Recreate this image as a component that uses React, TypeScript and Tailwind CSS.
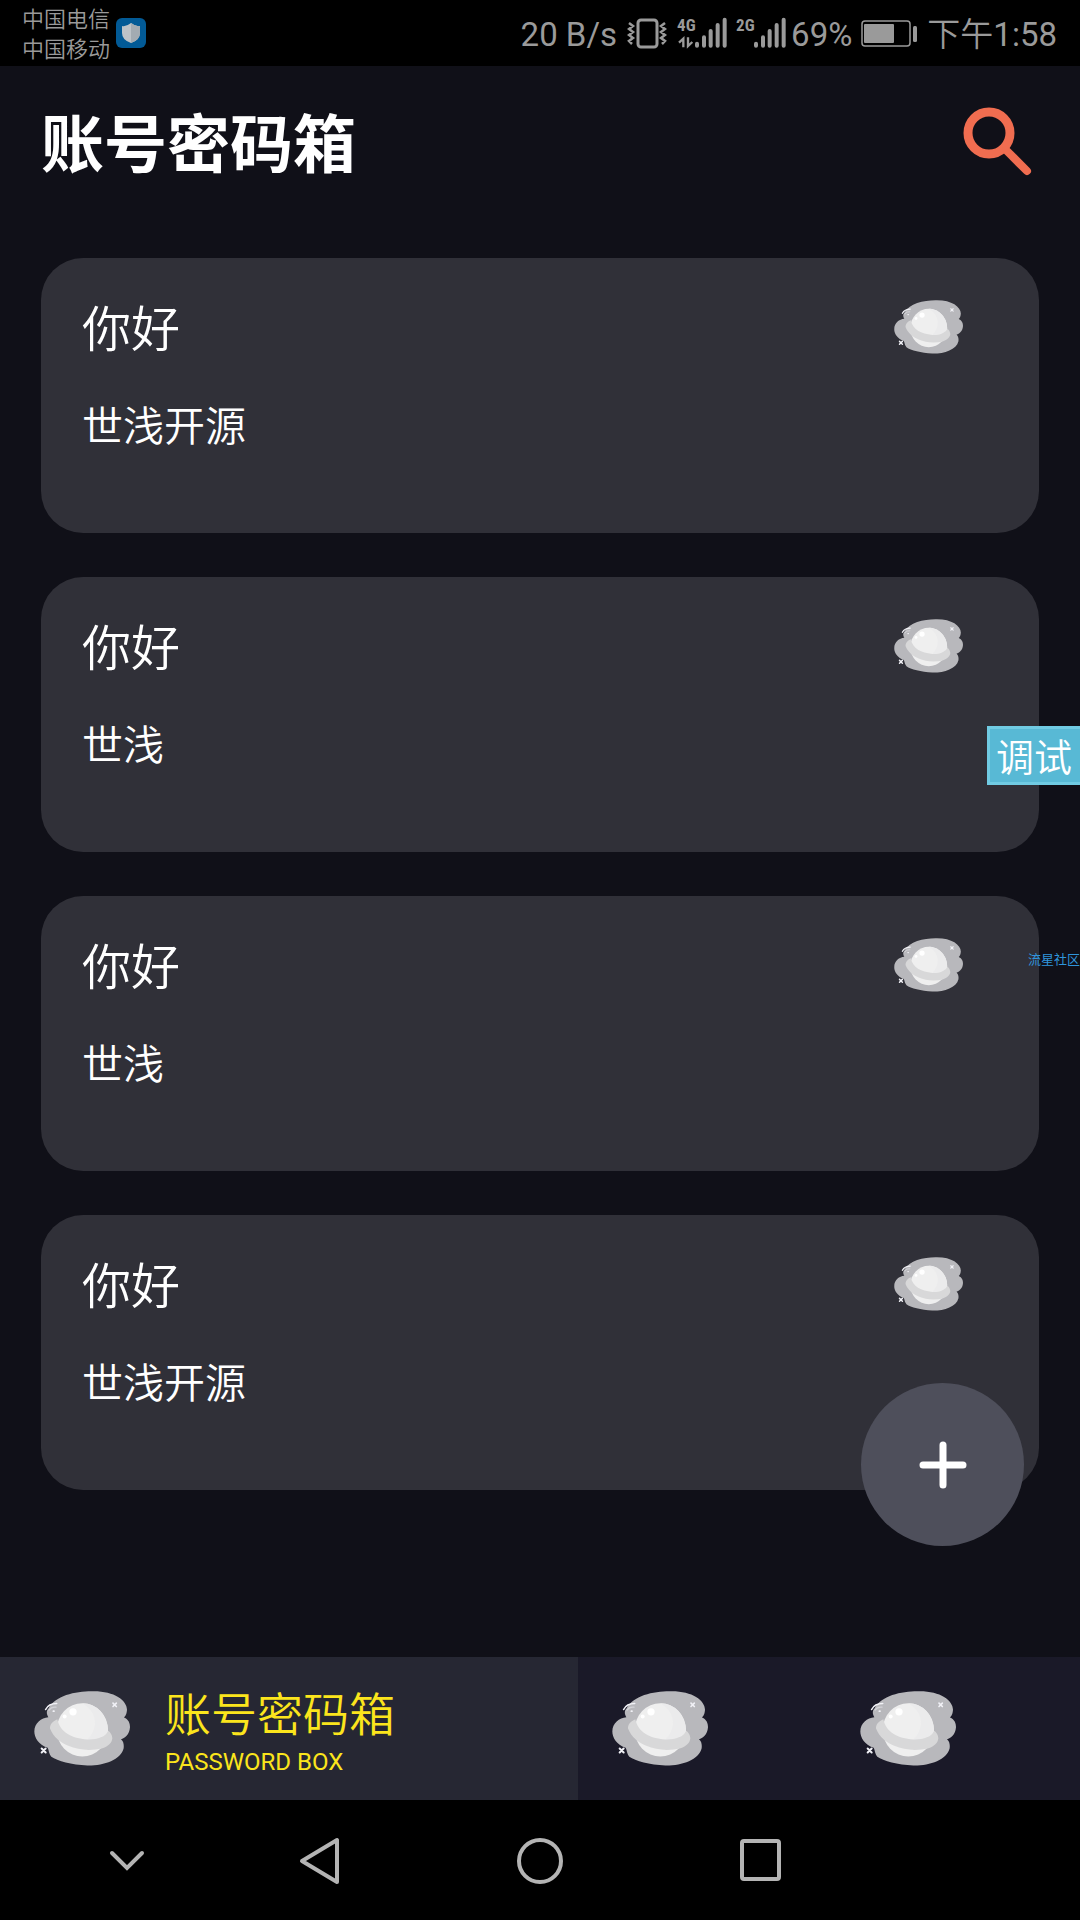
import { useState } from "react";

interface Account {
  id: number;
  title: string;
  owner: string;
}

const ACCOUNTS: Account[] = [
  { id: 1, title: "你好", owner: "世浅开源" },
  { id: 2, title: "你好", owner: "世浅" },
  { id: 3, title: "你好", owner: "世浅" },
  { id: 4, title: "你好", owner: "世浅开源" },
];

function PlanetIcon({ className }: { className: string }) {
  return (
    <svg viewBox="102 152 288 224" className={className} aria-hidden="true">
      <path
        d="M145 230C140 222 138 212 145 205C165 165 225 152 275 152C340 150 381 178 381 208C380 222 376 227 372 231C386 237 390 248 390 260C388 284 374 292 363 296C371 303 372 312 371 323C363 358 310 376 262 375C215 373 172 362 154 349C146 338 147 330 143 322C115 312 103 291 103 273C103 247 124 232 145 230Z"
        fill="#b8b8bc"
      />
      <ellipse cx="247" cy="268" rx="77" ry="80" fill="#efefef" />
      <path
        d="M247 188C292 188 324 226 324 272C312 292 285 297 262 297C290 270 300 220 247 188Z"
        fill="#ebebec"
      />
      <path
        d="M172 236C156 243 150 252 150 264C160 290 182 307 205 316C235 330 275 331 305 324C325 318 336 306 337 293C336 283 332 277 325 271C316 290 290 298 262 297C215 293 180 275 172 236Z"
        fill="#d8d8d9"
      />
      <circle cx="219" cy="214" r="11" fill="#fff" />
      <circle cx="194" cy="228" r="6" fill="#fff" />
      <g fill="none" stroke="#f1f1f6" strokeLinecap="round">
        <path d="M137 207Q146 189 170 189" strokeWidth="5" />
        <path d="M147 209Q154 198 168 200" strokeWidth="4" stroke="#d2d2d7" />
        <path d="M160 212h2" strokeWidth="5" />
        <path d="M125 324l12 12M137 324l-12 12" strokeWidth="6" />
        <path d="M339 188l10 10M349 188l-10 10" strokeWidth="5" />
      </g>
    </svg>
  );
}

function ShieldBadge() {
  return (
    <svg viewBox="0 0 30 30" className="size-[30px]" aria-hidden="true">
      <rect width="30" height="30" rx="6" fill="#025a96" />
      <path d="M15 5Q20 9 24 8V15Q24 22 15 25Q6 22 6 15V8Q10 9 15 5Z" fill="#bdc3c8" />
      <path d="M15 5Q20 9 24 8V15Q24 22 15 25Z" fill="#a3abb2" />
    </svg>
  );
}

function VibrateIcon() {
  return (
    <svg viewBox="0 0 40 32" className="h-8 w-10" fill="none" stroke="#9a9a9a" aria-hidden="true">
      <rect x="11" y="3" width="19" height="27" rx="3" strokeWidth="3" />
      <path
        d="M2 6l4 3-4 3 4 3-4 3 4 3-4 3 3 3M38 6l-4 3 4 3-4 3 4 3-4 3 4 3-3 3"
        strokeWidth="2.5"
      />
    </svg>
  );
}

function SignalIcon({ label, data }: { label: string; data?: boolean }) {
  return (
    <div className="relative h-8 w-[50px]">
      <svg viewBox="528 51 150 96" className="h-8 w-[50px]" aria-hidden="true">
        <g stroke="#9a9a9a" strokeWidth="12" strokeLinecap="round">
          <path d="M588 131v6M609 112v25M629 93v44M650 75v62M671 59v78" />
        </g>
        {data && (
          <g stroke="#9a9a9a" strokeWidth="7" fill="none">
            <path d="M547 142V116L534 128M561 112V138L574 126" />
          </g>
        )}
      </svg>
      <span className="absolute top-0 left-0 font-['Roboto_Condensed',Roboto,sans-serif] text-[17px] leading-4 font-bold">
        {label}
      </span>
    </div>
  );
}

function BatteryIcon() {
  return (
    <svg viewBox="0 0 56 28" className="h-7 w-14" aria-hidden="true">
      <rect x="1" y="2" width="48" height="25" rx="3" fill="none" stroke="#9a9a9a" strokeWidth="1.5" />
      <rect x="3" y="5" width="30" height="19" rx="1" fill="#9a9a9a" />
      <rect x="52" y="7" width="4" height="16" rx="1.5" fill="#9a9a9a" />
    </svg>
  );
}

function StatusBar() {
  return (
    <div className="flex h-[66px] shrink-0 items-center justify-between bg-black pr-[23px] pl-[22px] text-[#9a9a9a]">
      <div className="flex items-center gap-[6px]">
        <div className="pt-1 text-[22px] leading-[30px] font-[350]">
          <p>中国电信</p>
          <p>中国移动</p>
        </div>
        <ShieldBadge />
      </div>
      <div className="flex items-center text-[33px] leading-10">
        <span className="mr-[10px] pt-1">20 B/s</span>
        <VibrateIcon />
        <div className="mr-[5px] ml-[10px] flex gap-[9px]">
          <SignalIcon label="4G" data />
          <SignalIcon label="2G" />
        </div>
        <span className="mr-[9px] pt-1">69%</span>
        <BatteryIcon />
        <span className="ml-[10px] pt-1">
          <span className="font-[350]">下午</span>1:58
        </span>
      </div>
    </div>
  );
}

function AccountCard({ account }: { account: Account }) {
  return (
    <li className="flex h-[275px] items-start justify-between rounded-[42px] bg-[#303038] pt-[42px] pr-[76px] pl-[41px]">
      <div className="pt-[2px] font-[350]">
        <h2 className="text-[49px] leading-[58px]">{account.title}</h2>
        <p className="mt-10 text-[41px] leading-[54px]">{account.owner}</p>
      </div>
      <PlanetIcon className="h-[54px] w-[69px]" />
    </li>
  );
}

function TabBar() {
  const [active, setActive] = useState(0);

  return (
    <nav className="grid h-[143px] shrink-0 grid-cols-[578fr_248fr_254fr] bg-[#1a1928]">
      <button
        type="button"
        onClick={() => setActive(0)}
        aria-current={active === 0 ? "page" : undefined}
        className="flex items-center gap-[35px] bg-[#262733] pl-[34px] text-left text-[#fbe51c]"
      >
        <PlanetIcon className="h-[75px] w-24" />
        <span className="pt-2">
          <span className="block text-[46px] leading-[58px] font-[350]">账号密码箱</span>
          <span className="block text-[24px] leading-9">PASSWORD BOX</span>
        </span>
      </button>
      <button
        type="button"
        aria-label="第二页"
        onClick={() => setActive(1)}
        className="flex items-center pl-[34px]"
      >
        <PlanetIcon className="h-[75px] w-24" />
      </button>
      <button
        type="button"
        aria-label="第三页"
        onClick={() => setActive(2)}
        className="flex items-center pl-[34px]"
      >
        <PlanetIcon className="h-[75px] w-24" />
      </button>
    </nav>
  );
}

function SystemNav() {
  return (
    <div className="grid h-[120px] shrink-0 grid-cols-[166fr_220fr_220fr_220fr_210fr] place-items-center bg-black pl-11">
      <button type="button" aria-label="收起">
        <svg viewBox="0 0 48 48" className="size-12" fill="none" stroke="#b4b4b4" strokeWidth="4" strokeLinecap="round">
          <path d="M9 17l15 15 15-15" />
        </svg>
      </button>
      <button type="button" aria-label="返回">
        <svg viewBox="0 0 48 48" className="size-12" fill="none" stroke="#b4b4b4" strokeWidth="4" strokeLinejoin="round">
          <path d="M41 4v42L6 25z" />
        </svg>
      </button>
      <button type="button" aria-label="主页">
        <svg viewBox="0 0 48 48" className="size-12" fill="none" stroke="#b4b4b4" strokeWidth="4">
          <circle cx="24" cy="25" r="21" />
        </svg>
      </button>
      <button type="button" aria-label="最近任务">
        <svg viewBox="0 0 48 48" className="size-12" fill="none" stroke="#b4b4b4" strokeWidth="4">
          <rect x="6" y="5" width="37" height="38" rx="2" />
        </svg>
      </button>
    </div>
  );
}

export default function App() {
  return (
    <div className="relative flex min-h-screen flex-col overflow-hidden bg-[#101018] font-[Roboto,'Noto_Sans_CJK_SC',sans-serif] text-white">
      <StatusBar />

      <main className="relative flex-1 px-[41px]">
        <header className="flex items-center justify-between pt-9 pr-[6px]">
          <h1 className="pt-2 text-[63px] leading-[72px] font-bold">账号密码箱</h1>
          <button type="button" aria-label="搜索">
            <svg viewBox="0 0 70 70" className="size-[70px]" fill="none" stroke="#f06d50" strokeLinecap="round">
              <circle cx="26" cy="26" r="21" strokeWidth="9" />
              <path d="M43 43l21 21" strokeWidth="8" />
            </svg>
          </button>
        </header>

        <ul className="mt-[76px] flex flex-col gap-11">
          {ACCOUNTS.map((account) => (
            <AccountCard key={account.id} account={account} />
          ))}
        </ul>

        <button
          type="button"
          aria-label="添加"
          className="absolute right-14 bottom-[111px] flex size-[163px] items-center justify-center rounded-full bg-[#4e4f5b]"
        >
          <svg viewBox="0 0 48 48" className="size-12" stroke="#fff" strokeWidth="7" strokeLinecap="round">
            <path d="M24 4v40M4 24h40" />
          </svg>
        </button>
      </main>

      <TabBar />
      <SystemNav />

      <button
        type="button"
        className="absolute top-[726px] right-0 h-[59px] w-[93px] border-[3px] border-r-0 border-[#70cbe3] bg-[#58b9d5] pt-1 pl-[6px] text-left text-[38px] leading-[50px] font-[350] whitespace-nowrap"
      >
        调试
      </button>
      <span className="absolute top-[950px] right-0 text-[13px] leading-5 text-[#2f95dc]">
        流星社区
      </span>
    </div>
  );
}
